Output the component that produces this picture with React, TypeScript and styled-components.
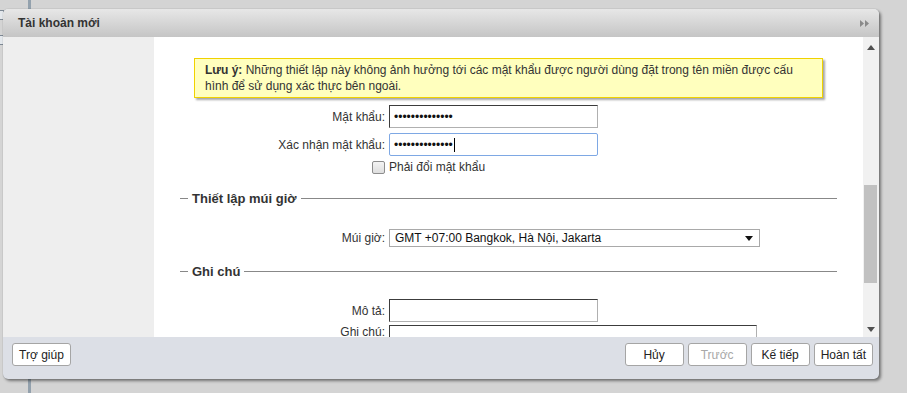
import React from "react";
import styled, { createGlobalStyle } from "styled-components";

const Global = createGlobalStyle`
  html, body { margin: 0; padding: 0; background: #d4d4d4; }
  body {
    font-family: "Liberation Sans", Arial, sans-serif;
    font-size: 12px;
    color: #333;
    width: 907px;
    height: 393px;
    overflow: hidden;
  }
  * { box-sizing: border-box; }
`;

const Page = styled.div`
  position: relative;
  width: 907px;
  height: 393px;
  overflow: hidden;
  background: #d4d4d4;
`;

const BackLine = styled.div`
  position: absolute;
  left: 28px;
  top: 0;
  bottom: 0;
  width: 3px;
  background: #93a1ad;
`;

const BackTab = styled.div<{ $top: number }>`
  position: absolute;
  left: -4px;
  top: ${(p) => p.$top}px;
  width: 8px;
  height: 10px;
  border: 1px solid #7d8894;
  background: #e4e8ec;
`;

const Dialog = styled.section`
  position: absolute;
  left: 3px;
  top: 9px;
  width: 876px;
  height: 370px;
  display: flex;
  flex-direction: column;
  border-radius: 5px;
  overflow: hidden;
  background: #dcdfe6;
  box-shadow: 2px 2px 3px rgba(0, 0, 0, 0.45), 0 0 1px rgba(0, 0, 0, 0.35);
`;

const Header = styled.header`
  height: 28px;
  flex: none;
  display: flex;
  align-items: center;
  justify-content: space-between;
  padding: 0 10px 0 15px;
  background: linear-gradient(#e7e7e7, #c5c5c5);
`;

const Title = styled.h1`
  margin: 0;
  font-size: 12px;
  font-weight: bold;
  color: #333;
`;

const Body = styled.div`
  height: 300px;
  flex: none;
  display: flex;
  background: #fff;
`;

const Sidebar = styled.aside`
  width: 151px;
  flex: none;
  background: #eeeeee;
`;

const Content = styled.div`
  flex: 1;
  overflow: hidden;
  display: flex;
  flex-direction: column;
  padding-top: 21px;
`;

const Note = styled.div`
  margin: 0 40px;
  padding: 3px 10px;
  line-height: 16px;
  background: #ffffbe;
  border: 1px solid #f0d200;
  box-shadow: 2px 2px 2px rgba(0, 0, 0, 0.35);
  color: #333;
`;

const Row = styled.div<{ $mt: number; $align?: string }>`
  display: grid;
  grid-template-columns: 231px auto;
  column-gap: 4px;
  align-items: ${(p) => p.$align || "center"};
  margin-top: ${(p) => p.$mt}px;
`;

const Label = styled.label`
  text-align: right;
  color: #333;
  white-space: nowrap;
  display: flex;
  justify-content: flex-end;
`;

const Field = styled.div<{ $focused?: boolean; $w?: number; $h?: number }>`
  width: ${(p) => p.$w || 209}px;
  height: ${(p) => p.$h || 23}px;
  padding: 0 4px;
  display: flex;
  align-items: center;
  background: #fff;
  border: 1px solid;
  border-color: ${(p) =>
    p.$focused ? "#7ea8e4" : "#3c3c3c #b0b0b0 #b0b0b0 #3c3c3c"};
  border-radius: ${(p) => (p.$focused ? "2px" : "0")};
  color: #111;
  font-size: 12px;
  letter-spacing: 0;
`;

const Caret = styled.span`
  display: inline-block;
  width: 1px;
  height: 14px;
  background: #000;
  margin-left: 1px;
`;

const Check = styled.span`
  width: 13px;
  height: 13px;
  border: 1px solid #8d8d8d;
  border-radius: 2px;
  background: linear-gradient(#f4f4f4, #dedede);
`;

const CheckText = styled.span`
  color: #333;
  line-height: 13px;
`;

const Section = styled.div<{ $mt: number }>`
  display: flex;
  align-items: center;
  margin: ${(p) => p.$mt}px 26px 0;
  height: 16px;
  gap: 4px;
`;

const Rule = styled.span<{ $grow?: boolean }>`
  height: 1px;
  background: #888;
  width: 8px;
  flex: ${(p) => (p.$grow ? "1" : "none")};
`;

const SectionTitle = styled.h2`
  margin: 0;
  font-size: 13px;
  font-weight: bold;
  color: #333;
`;

const Select = styled.div`
  width: 371px;
  height: 18px;
  border: 1px solid #a9a9a9;
  display: flex;
  align-items: center;
  justify-content: space-between;
  padding: 0 6px 0 5px;
  color: #111;
  background: #fff;
`;

const Footer = styled.footer`
  flex: 1;
  display: flex;
  justify-content: space-between;
  align-items: flex-start;
  padding: 6px 6px 0 9px;
`;

const Group = styled.div`
  display: flex;
  gap: 4px;
`;

const Button = styled.button<{ $disabled?: boolean }>`
  height: 23px;
  min-width: 59px;
  padding: 0 6px;
  border: 1px solid #a5a5a5;
  border-radius: 3px;
  background: #fff;
  font-family: "Liberation Sans", Arial, sans-serif;
  font-size: 12px;
  color: ${(p) => (p.$disabled ? "#a8a8a8" : "#222")};
`;

const Scrollbar = styled.div`
  width: 16px;
  flex: none;
  background: #f1f1f1;
  display: flex;
  flex-direction: column;
`;

const ArrowBox = styled.div<{ $h: number }>`
  height: ${(p) => p.$h}px;
  display: flex;
  align-items: center;
  justify-content: center;
`;

const Thumb = styled.div`
  margin: 128px 2px 0 1px;
  height: 98px;
  background: #c1c1c1;
`;

const Spacer = styled.div`
  flex: 1;
`;

const Tri = ({ down = false, color = "#505050" }: { down?: boolean; color?: string }) => (
  <svg width="8" height="5" viewBox="0 0 8 5">
    <path d={down ? "M0 0 H8 L4 5 Z" : "M0 5 H8 L4 0 Z"} fill={color} />
  </svg>
);

const Collapse = () => (
  <svg width="9" height="7" viewBox="0 0 9 7">
    <path d="M0 0 L4 3.5 L0 7 Z M5 0 L9 3.5 L5 7 Z" fill="#8a8a8a" />
  </svg>
);

export default function App() {
  const dots = "••••••••••••••";
  return (
    <Page>
      <Global />
      <BackLine />
      <BackTab $top={10} />
      <BackTab $top={35} />
      <Dialog>
        <Header>
          <Title>Tài khoản mới</Title>
          <Collapse />
        </Header>
        <Body>
          <Sidebar />
          <Content>
            <Note>
              <b>Lưu ý:</b> Những thiết lập này không ảnh hưởng tới các mật khẩu được người dùng đặt trong tên miền được cấu hình để sử dụng xác thực bên ngoài.
            </Note>
            <Row $mt={7}>
              <Label>Mật khẩu:</Label>
              <Field>{dots}</Field>
            </Row>
            <Row $mt={5}>
              <Label>Xác nhận mật khẩu:</Label>
              <Field $focused>
                {dots}
                <Caret />
              </Field>
            </Row>
            <Row $mt={5}>
              <Label>
                <Check />
              </Label>
              <CheckText>Phải đổi mật khẩu</CheckText>
            </Row>
            <Section $mt={17}>
              <Rule />
              <SectionTitle>Thiết lập múi giờ</SectionTitle>
              <Rule $grow />
            </Section>
            <Row $mt={23}>
              <Label>Múi giờ:</Label>
              <Select>
                <span>GMT +07:00 Bangkok, Hà Nội, Jakarta</span>
                <Tri down color="#111" />
              </Select>
            </Row>
            <Section $mt={17}>
              <Rule />
              <SectionTitle>Ghi chú</SectionTitle>
              <Rule $grow />
            </Section>
            <Row $mt={20}>
              <Label>Mô tả:</Label>
              <Field />
            </Row>
            <Row $mt={3} $align="start">
              <Label>Ghi chú:</Label>
              <Field $w={368} $h={60} />
            </Row>
          </Content>
          <Scrollbar>
            <ArrowBox $h={20}>
              <Tri />
            </ArrowBox>
            <Thumb />
            <Spacer />
            <ArrowBox $h={16}>
              <Tri down />
            </ArrowBox>
          </Scrollbar>
        </Body>
        <Footer>
          <Button>Trợ giúp</Button>
          <Group>
            <Button>Hủy</Button>
            <Button $disabled>Trước</Button>
            <Button>Kế tiếp</Button>
            <Button>Hoàn tất</Button>
          </Group>
        </Footer>
      </Dialog>
    </Page>
  );
}
